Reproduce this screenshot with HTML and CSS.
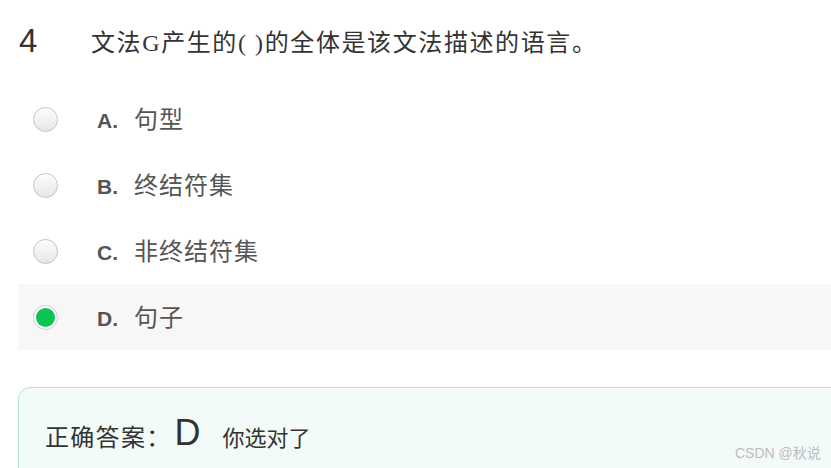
FILE: index.html
```html
<!DOCTYPE html>
<html lang="zh">
<head>
<meta charset="utf-8">
<link rel="stylesheet" href="styles.css">
</head>
<body>
<div class="page">
  <div class="question">
    <span class="qnum">4</span>
    <span class="qtext">文法G产生的( )的全体是该文法描述的语言。</span>
  </div>
  <div class="options">
    <div class="option"><span class="radio"></span><span class="label"><span class="letter">A.</span><span class="otext">句型</span></span></div>
    <div class="option"><span class="radio"></span><span class="label"><span class="letter">B.</span><span class="otext">终结符集</span></span></div>
    <div class="option"><span class="radio"></span><span class="label"><span class="letter">C.</span><span class="otext">非终结符集</span></span></div>
    <div class="option selected"><span class="radio checked"></span><span class="label"><span class="letter">D.</span><span class="otext">句子</span></span></div>
  </div>
  <div class="answer">
    <span class="alabel">正确答案：</span><span class="aval">D</span><span class="amsg">你选对了</span>
  </div>
</div>
<div class="watermark">CSDN @秋说</div>
</body>
</html>
```
FILE: styles.css
```css
html, body {
  margin: 0;
  padding: 0;
  background: #fff;
  overflow: hidden;
}
.page {
  padding: 15px 0 0 18px;
  font-family: "Liberation Sans", "Noto Sans CJK SC", sans-serif;
}
.question {
  display: flex;
  align-items: center;
  height: 50px;
}
.qnum {
  width: 72px;
  font-size: 33px;
  color: #333;
  padding-left: 1px;
  line-height: 1;
}
.qtext {
  font-family: "Liberation Serif", "Noto Sans CJK SC", serif;
  font-size: 24px;
  color: #333;
  letter-spacing: 1.6px;
}
.options {
  margin-top: 21px;
}
.option {
  display: flex;
  align-items: center;
  height: 66px;
  padding-left: 15px;
}
.option.selected {
  background: #f7f7f7;
}
.radio {
  width: 23px;
  height: 23px;
  border-radius: 50%;
  border: 1px solid #c4c4c4;
  background: linear-gradient(#fdfdfd, #e6e6e6);
  box-shadow: inset 0 1px 1px rgba(255,255,255,0.8);
  position: relative;
  flex: none;
}
.radio.checked {
  background: #fff;
  border-color: #cfcfcf;
}
.radio.checked::after {
  content: "";
  position: absolute;
  left: 2px;
  top: 2px;
  width: 19px;
  height: 19px;
  border-radius: 50%;
  background: #0bc454;
}
.label {
  margin-left: 39px;
  display: flex;
  align-items: baseline;
  margin-top: -3px;
}
.letter {
  width: 37px;
  font-size: 21px;
  font-weight: bold;
  color: #555;
}
.otext {
  font-size: 24px;
  color: #555;
  letter-spacing: 1px;
}
.answer {
  margin-top: 37px;
  margin-right: -20px;
  border: 1px solid #aee8cf;
  border-radius: 12px;
  background: #f3fbf8;
  height: 95px;
  padding-left: 26px;
  display: flex;
  align-items: center;
  padding-bottom: 14px;
}
.alabel {
  font-size: 24px;
  color: #333;
  letter-spacing: 1.3px;
}
.aval {
  font-size: 36px;
  color: #333;
  margin-left: 3px;
  margin-right: 22px;
  line-height: 1;
  margin-top: -6px;
}
.amsg {
  font-size: 22px;
  color: #333;
}
.watermark {
  position: absolute;
  left: 735px;
  top: 442px;
  font-family: "Liberation Sans", "Noto Sans CJK SC", sans-serif;
  font-size: 14px;
  color: #bdbdbd;
}
```
